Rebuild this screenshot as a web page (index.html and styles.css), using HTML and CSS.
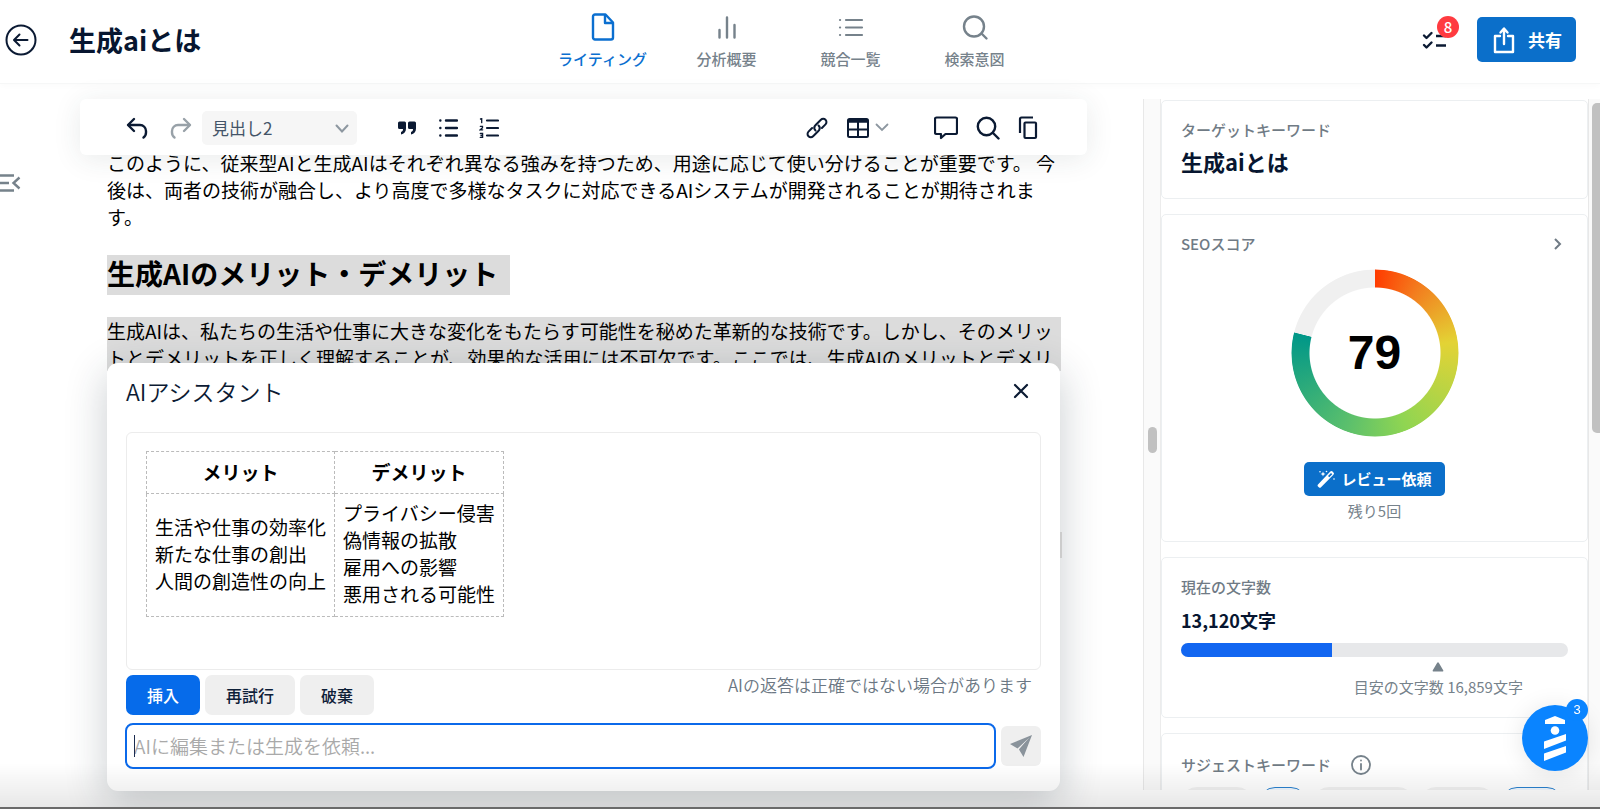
FILE: index.html
```html
<!DOCTYPE html>
<html lang="ja">
<head>
<meta charset="utf-8">
<title>生成aiとは</title>
<link rel="stylesheet" href="styles.css">
</head>
<body>
<header class="header">
  <div class="header-left">
    <button class="icon-btn" aria-label="戻る">
      <svg width="32" height="32" viewBox="0 0 32 32" fill="none" stroke="currentColor" stroke-width="2" stroke-linecap="round" stroke-linejoin="round"><circle cx="16" cy="16" r="14.500"/><path d="M22.500 16H9.500M14.500 10.500L9 16l5.500 5.500"/></svg>
    </button>
    <h1 class="page-title">生成aiとは</h1>
  </div>
  <nav class="nav">
    <a class="nav-item active" href="#">
      <svg width="28" height="28" viewBox="0 0 28 28" fill="none" stroke="currentColor" stroke-width="2.400" stroke-linejoin="round"><path d="M6 1.500H16.500l7.500 8v15a2 2 0 0 1-2 2H6a2 2 0 0 1-2-2v-21a2 2 0 0 1 2-2z"/><path d="M16 2v8h7.500"/></svg>
      <span>ライティング</span>
    </a>
    <a class="nav-item" href="#">
      <svg width="28" height="28" viewBox="0 0 28 28" fill="none" stroke="currentColor" stroke-width="2.400" stroke-linecap="round"><path d="M6.500 17v7.500M14 4.500v20M21.500 12v12.500"/></svg>
      <span>分析概要</span>
    </a>
    <a class="nav-item" href="#">
      <svg width="28" height="28" viewBox="0 0 28 28" fill="none" stroke="currentColor" stroke-width="2.200" stroke-linecap="round"><path d="M9 7h16M9 14.500h16M9 22h16M3 7h.1M3 14.500h.1M3 22h.1"/></svg>
      <span>競合一覧</span>
    </a>
    <a class="nav-item" href="#">
      <svg width="28" height="28" viewBox="0 0 28 28" fill="none" stroke="currentColor" stroke-width="2.400" stroke-linecap="round"><circle cx="13" cy="13.500" r="10"/><path d="M20.500 20.500l5 5"/></svg>
      <span>検索意図</span>
    </a>
  </nav>
  <div class="header-right">
    <button class="icon-btn tasks" aria-label="タスク">
      <svg width="26" height="20" viewBox="0 0 26 20" fill="none" stroke="currentColor" stroke-width="2.400" stroke-linecap="round" stroke-linejoin="round"><path d="M2 5.500L4.500 8l5-5M2 15l2.500 2.500 5-5"/><path d="M14 6h10M14 15.500h10" stroke-linecap="butt"/></svg>
      <span class="badge">8</span>
    </button>
    <button class="share">
      <svg width="22" height="28" viewBox="0 0 22 28" fill="none" stroke="currentColor" stroke-width="2.400" stroke-linejoin="round" stroke-linecap="round"><path d="M7 10H2v16h18V10h-5"/><path d="M11 18V3M7.500 6.500L11 2.500l3.500 4"/></svg>
      <span>共有</span>
    </button>
  </div>
</header>

<main class="workspace">
  <aside class="rail">
    <button class="icon-btn" aria-label="メニューを閉じる">
      <svg width="21" height="20" viewBox="0 0 21 20" fill="none" stroke="currentColor" stroke-width="2.400"><path d="M0 2.500h14M0 10h9M0 17.500h14M19.500 4.500L13.500 10l6 5.500"/></svg>
    </button>
  </aside>

  <section class="editor">
    <div class="toolbar">
      <div class="tools tools-left">
        <button class="icon-btn" aria-label="元に戻す"><svg width="22" height="24" viewBox="0 0 22 24" fill="none" stroke="currentColor" stroke-width="2.400" stroke-linecap="round" stroke-linejoin="round"><path d="M8 3L2 9l6 6"/><path d="M2.500 9H14a6 6 0 0 1 6 6v1.500a6 6 0 0 1-2.500 5"/></svg></button>
        <button class="icon-btn muted" aria-label="やり直す"><svg width="22" height="24" viewBox="0 0 22 24" fill="none" stroke="currentColor" stroke-width="2.400" stroke-linecap="round" stroke-linejoin="round"><path d="M14 3l6 6-6 6"/><path d="M19.500 9H8a6 6 0 0 0-6 6v1.500a6 6 0 0 0 2.500 5"/></svg></button>
        <label class="format">
          <select aria-label="段落スタイル"><option>見出し2</option></select>
          <svg class="format-arrow" width="14" height="9" viewBox="0 0 14 9" fill="none" stroke="currentColor" stroke-width="2" stroke-linecap="round"><path d="M1.500 1.500L7 7.500l5.500-6"/></svg>
        </label>
      </div>
      <div class="tools tools-list">
        <button class="icon-btn" aria-label="引用"><svg width="20" height="20" viewBox="0 0 20 20" fill="currentColor"><path d="M2.500 3.500H7.500a1.500 1.500 0 0 1 1.500 1.500v5.500c0 3-1.800 5.500-5 6v-2.500c1.400-.4 2-1.300 2-3H2.500A1.500 1.500 0 0 1 1 9.500V5a1.500 1.500 0 0 1 1.500-1.500zM12.500 3.500H17.500A1.500 1.500 0 0 1 19 5v5.500c0 3-1.800 5.500-5 6v-2.500c1.400-.4 2-1.300 2-3h-3.500A1.500 1.500 0 0 1 11 9.500V5a1.500 1.500 0 0 1 1.500-1.500z"/></svg></button>
        <button class="icon-btn" aria-label="箇条書き"><svg width="20" height="20" viewBox="0 0 20 20" fill="none" stroke="currentColor" stroke-width="2.400" stroke-linecap="round"><path d="M8 2.500h11M8 10h11M8 17.500h11M2.300 2.500h.1M2.300 10h.1M2.300 17.500h.1"/></svg></button>
        <button class="icon-btn" aria-label="番号付きリスト"><svg width="20" height="20" viewBox="0 0 20 20" fill="none" stroke="currentColor" stroke-width="2.200" stroke-linecap="round"><path d="M8 2.500h11M8 10h11M8 17.500h11"/><path stroke-width="1.300" d="M1.500 1l1.200-.3v4M1.300 8.300h2.200v1.500l-2.200 2h2.400M1.300 15.500h2.300v4H1.300M2 17.500h1.500"/></svg></button>
      </div>
      <div class="tools tools-insert">
        <button class="icon-btn" aria-label="リンク"><svg width="22" height="22" viewBox="0 0 22 22" fill="none" stroke="currentColor" stroke-width="2" stroke-linecap="round"><path d="M9.500 13.500a3.600 3.600 0 0 1-.6-4.600l1-1.100 5-5a3.200 3.200 0 0 1 4.600 4.600l-3.600 3.600"/><path d="M12.500 8.500a3.600 3.600 0 0 1 .6 4.600l-1 1.100-5 5a3.200 3.200 0 0 1-4.600-4.600l3.600-3.600"/></svg></button>
        <button class="icon-btn table-btn" aria-label="表"><svg width="22" height="20" viewBox="0 0 22 20" fill="none" stroke="currentColor" stroke-width="2"><rect x="1" y="1" width="20" height="18" rx="1.500"/><path d="M1 3h20" stroke-width="3.500"/><path d="M1 11.500h20M11 4v15"/></svg><svg class="caret" width="14" height="9" viewBox="0 0 14 9" fill="none" stroke="currentColor" stroke-width="1.800" stroke-linecap="round"><path d="M1.500 1.500L7 7l5.500-5.500"/></svg></button>
      </div>
      <div class="tools tools-right">
        <button class="icon-btn" aria-label="コメント"><svg width="24" height="24" viewBox="0 0 24 24" fill="none" stroke="currentColor" stroke-width="2.200" stroke-linejoin="round"><path d="M2.500 1.500h19a1.500 1.500 0 0 1 1.500 1.500v13.500a1.500 1.500 0 0 1-1.500 1.500H11.500l-4.500 4V18H2.500A1.500 1.500 0 0 1 1 16.500V3a1.500 1.500 0 0 1 1.500-1.500z"/></svg></button>
        <button class="icon-btn" aria-label="検索"><svg width="24" height="24" viewBox="0 0 24 24" fill="none" stroke="currentColor" stroke-width="2.400" stroke-linecap="round"><circle cx="10.500" cy="10.500" r="8.700"/><path d="M17 17l5.500 5.500"/></svg></button>
        <button class="icon-btn" aria-label="コピー"><svg width="20" height="24" viewBox="0 0 20 24" fill="none" stroke="currentColor" stroke-width="2.200" stroke-linejoin="round"><path d="M2 17V3a1.500 1.500 0 0 1 1.500-1.500H15"/><rect x="6.500" y="6.500" width="11.500" height="15.500" rx="1"/></svg></button>
      </div>
    </div>

    <article class="document">
      <p>このように、従来型AIと生成AIはそれぞれ異なる強みを持つため、用途に応じて使い分けることが重要です。 今後は、両者の技術が融合し、より高度で多様なタスクに対応できるAIシステムが開発されることが期待されます。</p>
      <h2><span class="selected">生成AIのメリット・デメリット</span></h2>
      <p class="selected">生成AIは、私たちの生活や仕事に大きな変化をもたらす可能性を秘めた革新的な技術です。しかし、そのメリットとデメリットを正しく理解することが、効果的な活用には不可欠です。ここでは、生成AIのメリットとデメリ</p>
    </article>

    <section class="assistant" aria-label="AIアシスタント">
      <header class="assistant-head">
        <h3>AIアシスタント</h3>
        <button class="icon-btn" aria-label="閉じる"><svg width="16" height="16" viewBox="0 0 16 16" fill="none" stroke="currentColor" stroke-width="2.200" stroke-linecap="round"><path d="M2 2l12 12M14 2L2 14"/></svg></button>
      </header>
      <div class="answer">
        <table>
          <thead><tr><th>メリット</th><th>デメリット</th></tr></thead>
          <tbody><tr><td>生活や仕事の効率化<br>新たな仕事の創出<br>人間の創造性の向上</td><td>プライバシー侵害<br>偽情報の拡散<br>雇用への影響<br>悪用される可能性</td></tr></tbody>
        </table>
      </div>
      <div class="actions">
        <button class="btn primary">挿入</button>
        <button class="btn">再試行</button>
        <button class="btn">破棄</button>
        <p class="note">AIの返答は正確ではない場合があります</p>
      </div>
      <form class="prompt">
        <div class="prompt-field">
          <input type="text" aria-label="AIへの依頼" placeholder="AIに編集または生成を依頼...">
          <span class="cursor"></span>
        </div>
        <button class="send" type="button" aria-label="送信"><svg width="24" height="24" viewBox="0 0 24 24" fill="currentColor"><path d="M23 1L1 10l7.500 4.500L20.500 3.500 10 15.500 14.500 23z"/><path d="M23 1l-9.500 13-3.500 1.500"/></svg></button>
      </form>
    </section>
    <div class="selection-edge"></div>
  </section>

  <div class="splitter"><div class="handle"></div></div>

  <aside class="sidebar">
    <div class="cards">
      <section class="card">
        <h4>ターゲットキーワード</h4>
        <p class="keyword">生成aiとは</p>
      </section>
      <section class="card score">
        <div class="card-head">
          <h4>SEOスコア</h4>
          <button class="icon-btn muted-dark" aria-label="詳細"><svg width="8" height="12" viewBox="0 0 8 12" fill="none" stroke="currentColor" stroke-width="2"><path d="M1 1l5 5-5 5"/></svg></button>
        </div>
        <div class="gauge"><div class="ring"></div><span>79</span></div>
        <button class="review">
          <svg width="18" height="18" viewBox="0 0 18 18" fill="currentColor"><path fill-rule="evenodd" d="M1 14.500L13.300 1.600a1.600 1.600 0 0 1 2.300 0l.8.800a1.600 1.600 0 0 1 0 2.300L4 17.300a1.600 1.600 0 0 1-2.200 0L1 16.500a1.500 1.500 0 0 1 0-2zM11 6l1.300 1.200 3-3-1.300-1.300z"/><circle cx="3" cy="1.800" r=".8"/><circle cx="9.500" cy="1.500" r=".8"/><circle cx="17" cy="9" r=".8"/><path d="M6 1.500l.7 1.800 1.800.7-1.800.7L6 6.500l-.7-1.800L3.500 4l1.800-.7z"/></svg>
          <span>レビュー依頼</span>
        </button>
        <p class="remain">残り5回</p>
      </section>
      <section class="card">
        <h4>現在の文字数</h4>
        <p class="count">13,120文字</p>
        <div class="bar"><div class="fill" style="width:39%"></div></div>
        <div class="target">
          <svg width="12" height="10" viewBox="0 0 12 10" fill="currentColor"><path d="M5.200.8a1 1 0 0 1 1.600 0l4.400 7.400a.9.900 0 0 1-.8 1.400H1.600a.9.900 0 0 1-.8-1.400z"/></svg>
          <span>目安の文字数 16,859文字</span>
        </div>
      </section>
      <section class="card">
        <div class="label-row">
          <h4>サジェストキーワード</h4>
          <svg width="20" height="20" viewBox="0 0 20 20" fill="none" stroke="currentColor" stroke-width="1.800" stroke-linecap="round"><circle cx="10" cy="10" r="9"/><path d="M10 9v5.500M10 5.500v.1"/></svg>
        </div>
        <div class="chips">
          <span class="chip chip-1"></span><span class="chip chip-2 on"></span><span class="chip chip-3"></span><span class="chip chip-4"></span><span class="chip chip-5 on"></span>
        </div>
      </section>
    </div>
    <div class="scroll-track"><div class="scroll-thumb"></div></div>
  </aside>
</main>
<div class="page-shade"></div>

<button class="chat" aria-label="チャットサポート">
  <svg width="24" height="46" viewBox="0 0 24 46" fill="#fff"><path d="M2 5L12 1l10 4v4H2z"/><circle cx="12" cy="15.500" r="4.300"/><path d="M1 26.500l22-7.500v6.500L1 34zM1 38.500l22-7.500v6.500L1 46z"/></svg>
  <span class="chat-badge">3</span>
</button>
</body>
</html>
```
FILE: styles.css
```css
* { box-sizing: border-box; }
body {
  margin: 0;
  height: 100vh;
  display: flex;
  flex-direction: column;
  overflow: hidden;
  background: #fff;
  color: #000;
  font-family: "Noto Sans CJK JP", sans-serif;
}
h1, h2, h3, h4, p { margin: 0; }
button, input, select { font-family: inherit; }
button { border: 0; cursor: pointer; }
svg { display: block; flex: none; }
.icon-btn { display: flex; align-items: center; padding: 0; background: none; color: #0b1a33; }
.muted { color: #98a1a8; }
.muted-dark { color: #707b85; }

.header {
  flex: none;
  display: flex;
  align-items: center;
  height: 84px;
  padding: 0 24px 0 5px;
  border-bottom: 1px solid #f6f7f7;
  box-shadow: 0 2px 6px rgba(0, 0, 0, .02);
}
.header-left { flex: 1; display: flex; align-items: center; gap: 32px; margin-top: -4px; }
.page-title { font-size: 27px; line-height: 40px; font-weight: 700; color: #071630; }
.nav { display: grid; grid-template-columns: repeat(4, 124px); margin-right: 4px; }
.nav-item {
  display: flex;
  flex-direction: column;
  align-items: center;
  gap: 7px;
  margin-top: -1px;
  font-size: 15px;
  line-height: 22px;
  font-weight: 500;
  color: #76828b;
  text-decoration: none;
}
.nav-item.active { color: #0b6fd0; }
.header-right { flex: 1; display: flex; align-items: center; justify-content: flex-end; gap: 29px; margin-top: -4px; }
.tasks { position: relative; }
.badge {
  position: absolute;
  left: 15px;
  top: -14px;
  width: 22px;
  height: 22px;
  border-radius: 50%;
  background: #ff3b40;
  color: #fff;
  font-size: 15px;
  line-height: 22px;
  font-weight: 500;
  text-align: center;
}
.share {
  display: flex;
  align-items: center;
  gap: 13px;
  height: 45px;
  padding: 0 14px 0 16px;
  border-radius: 5px;
  background: #0b6fca;
  color: #fff;
  font-size: 17px;
  font-weight: 700;
}

.workspace { flex: 1; min-height: 0; display: flex; padding: 15px 0 19px; }
.rail { flex: none; width: 80px; padding-top: 74px; }
.rail .icon-btn { color: #76828b; }

.editor { flex: 1; min-width: 0; position: relative; }
.toolbar {
  position: relative;
  z-index: 2;
  display: flex;
  align-items: center;
  height: 56px;
  padding: 1px 49px 0 46px;
  border-radius: 6px;
  background: #fff;
  box-shadow: 0 4px 28px rgba(40, 60, 60, .1);
}
.tools { display: flex; align-items: center; }
.tools-left { gap: 22px; }
.format { position: relative; margin-left: -12px; color: #8d97a0; }
.format select {
  appearance: none;
  display: block;
  width: 155px;
  height: 34px;
  padding: 0 10px;
  border: 0;
  border-radius: 5px;
  background: #f6f6f6;
  color: #445468;
  font-size: 17px;
}
.format-arrow { position: absolute; right: 8px; top: 13px; }
.tools-list { gap: 21px; margin-left: 40px; }
.tools-insert { gap: 19px; margin-left: auto; }
.table-btn { gap: 6px; }
.caret { color: #8d97a0; }
.tools-right { gap: 18px; margin-left: 45px; }

.document { margin-top: -6px; padding: 0 26px 0 27px; font-size: 19px; line-height: 27px; }
.document h2 { margin: 25px 0 22px; font-size: 28px; line-height: 36px; font-weight: 700; }
.selected { background: #dcdcdc; }
.document h2 .selected { display: inline-block; padding: 0 12px 4px 0; }

.assistant {
  position: absolute;
  z-index: 3;
  left: 27px;
  right: 27px;
  bottom: -1px;
  padding: 11px 19px 22px;
  border-radius: 11px;
  background: #fff;
  box-shadow: 0 10px 42px rgba(30, 45, 60, .24);
}
.assistant-head { display: flex; align-items: center; justify-content: space-between; padding-right: 12px; margin-bottom: 24px; }
.assistant h3 { font-size: 23px; line-height: 34px; font-weight: 350; color: #0b1a33; }
.answer { height: 238px; padding: 18px 19px; border: 1px solid #ececec; border-radius: 6px; }
.answer table { border-collapse: collapse; font-size: 19px; line-height: 27px; }
.answer th, .answer td { padding: 6px 8px 8px; border: 1px dashed #bbb; text-align: left; white-space: nowrap; }
.answer td { padding: 5px 8px 9px; }
.answer th { text-align: center; font-weight: 700; }
.actions { display: flex; gap: 5px; margin: 5px 0 8px; }
.btn { height: 40px; padding: 0 21px; border-radius: 7px; background: #efefef; color: #0e2038; font-size: 16px; font-weight: 500; }
.btn.primary { background: #066bea; color: #fff; }
.note { margin-left: auto; padding-right: 9px; font-size: 17px; line-height: 20px; font-weight: 350; color: #6b7783; }
.prompt { display: flex; align-items: center; gap: 5px; margin-left: -1px; }
.prompt-field { flex: 1; position: relative; }
.prompt input {
  display: block;
  width: 100%;
  height: 46px;
  padding: 0 7px 2px;
  border: 2px solid #0b69ea;
  border-radius: 8px;
  background: #fff;
  font-size: 19px;
  font-weight: 350;
  outline: none;
}
.prompt input::placeholder { color: #a9a9a9; }
.cursor { position: absolute; left: 9px; top: 12px; width: 1px; height: 22px; background: #1b2c50; }
.send { display: grid; place-items: center; width: 40px; height: 40px; padding: 0; border-radius: 6px; background: #efefef; color: #8a939b; }
.selection-edge { position: absolute; right: 25px; top: 433px; width: 2px; height: 26px; background: #ccc; z-index: 4; }

.splitter {
  flex: none;
  display: flex;
  align-items: center;
  justify-content: center;
  width: 18px;
  margin-left: 56px;
  background: #fafafa;
  border-left: 1px solid #e8e8e8;
  border-right: 1px solid #ececec;
}
.handle { width: 9px; height: 26px; margin-top: -10px; border-radius: 5px; background: #c1c1c1; }

.sidebar { flex: none; display: flex; width: 439px; overflow: hidden; }
.cards { flex: 1; display: flex; flex-direction: column; gap: 15px; padding-top: 1px; }
.card { flex: none; padding: 18px 19px 16px; border: 1px solid #eceff1; border-radius: 5px; }
.card h4 { font-size: 15px; line-height: 22px; font-weight: 500; color: #707b85; }
.keyword { margin-top: 4px; padding-bottom: 5px; font-size: 22px; line-height: 32px; font-weight: 700; color: #071630; }
.card-head { display: flex; align-items: center; justify-content: space-between; padding-right: 6px; }
.score { display: flex; flex-direction: column; align-items: center; }
.score .card-head { align-self: stretch; }
.gauge { position: relative; display: grid; place-items: center; width: 168px; height: 168px; margin-top: 14px; }
.ring {
  position: absolute;
  inset: 0;
  border-radius: 50%;
  background: conic-gradient(#ff3b00 0deg, #f37c1e 33deg, #e3d335 82deg, #8fd552 158deg, #5cc06c 200deg, #009788 284deg, #f0f0f0 284.500deg);
  mask: radial-gradient(circle, transparent 65px, #000 66px, #000 83px, transparent 84px);
}
.gauge span { font-family: "Liberation Sans", sans-serif; font-size: 48px; line-height: 48px; font-weight: 700; }
.review {
  display: flex;
  align-items: center;
  gap: 6px;
  height: 34px;
  margin-top: 25px;
  padding: 0 13px 1px;
  border-radius: 5px;
  background: #0b6fca;
  color: #fff;
  font-size: 15px;
  font-weight: 700;
}
.remain { margin: 4px 0 3px; font-size: 15px; line-height: 22px; color: #76828b; }
.count { margin-top: 9px; font-size: 18px; line-height: 26px; font-weight: 700; color: #071630; }
.bar { height: 14px; margin-top: 10px; border-radius: 7px; background: #e7e8ea; overflow: hidden; }
.fill { height: 100%; background: #1266f1; }
.target { display: flex; flex-direction: column; align-items: center; gap: 4px; margin-left: 33%; margin-top: 5px; padding-bottom: 3px; font-size: 15px; line-height: 22px; color: #76828b; }
.label-row { display: flex; align-items: center; gap: 20px; margin: 2px 0 11px; color: #76828b; }
.chips { display: flex; gap: 6px; }
.chip { height: 32px; border-radius: 16px; background: #f2f2f2; }
.chip.on { background: #f1f8ff; border: 1px solid #2a82d0; }
.chip-1 { width: 72px; }
.chip-2 { width: 48px; }
.chip-3 { width: 101px; }
.chip-4 { width: 75px; }
.chip-5 { width: 62px; }
.scroll-track { flex: none; width: 12px; padding: 4px 0 0 3px; background: #fafafa; border-left: 1px solid #e8e8e8; }
.scroll-thumb { height: 330px; border-radius: 5px 0 0 5px; background: #c1c1c1; }

.page-shade {
  position: fixed;
  z-index: 5;
  left: 0;
  right: 0;
  bottom: 0;
  height: 46px;
  border-bottom: 2px solid #6a6a6a;
  background: linear-gradient(rgba(0, 0, 0, 0), rgba(0, 0, 0, .09));
  pointer-events: none;
}
.chat {
  position: fixed;
  z-index: 6;
  right: 12px;
  bottom: 38px;
  display: grid;
  place-items: center;
  width: 66px;
  height: 66px;
  padding: 0;
  border-radius: 50%;
  background: #0a84ff;
  box-shadow: 0 2px 24px rgba(0, 0, 0, .1);
}
.chat-badge {
  position: absolute;
  right: 0;
  top: -6px;
  width: 22px;
  height: 22px;
  border-radius: 50%;
  background: #0a84ff;
  color: #fff;
  font-family: "Liberation Sans", sans-serif;
  font-size: 13px;
  line-height: 22px;
}
```
